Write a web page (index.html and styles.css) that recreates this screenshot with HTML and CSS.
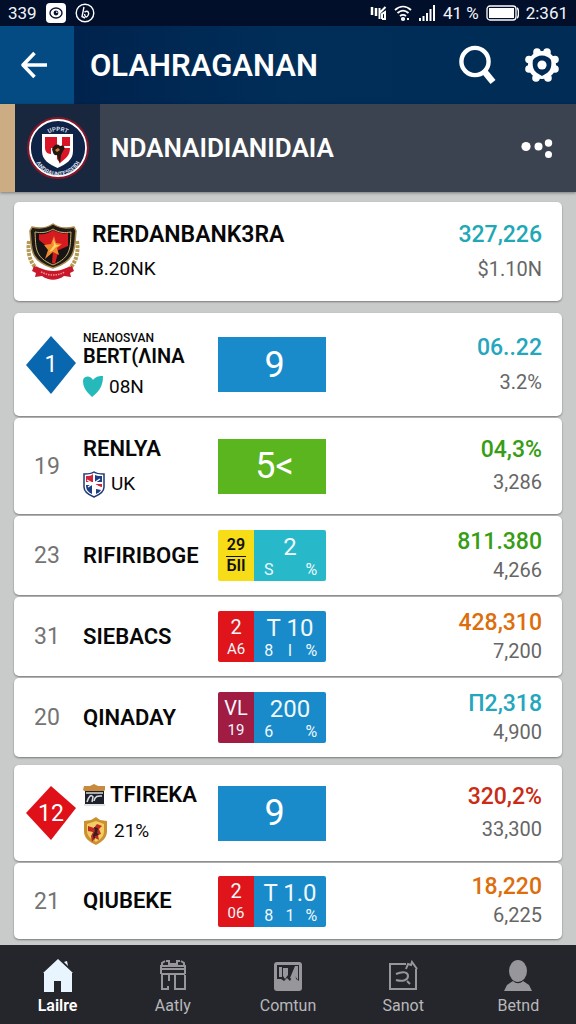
FILE: index.html
```html
<!DOCTYPE html>
<html lang="id">
<head>
  <meta charset="UTF-8" />
  <meta name="viewport" content="width=device-width, initial-scale=1.0" />
  <title>Olahraganan</title>
  <link rel="stylesheet" href="styles.css">
</head>
<body>
  <div class="status-bar">
    <div class="status-group">
      <span>339</span>
      <svg width="20" height="20" viewBox="0 0 20 20"><rect width="20" height="20" rx="4" fill="#fff"/><ellipse cx="10" cy="10" rx="6" ry="5" fill="none" stroke="#0a1530" stroke-width="1.4"/><circle cx="10" cy="10" r="2.4" fill="#0a1530"/><circle cx="10.8" cy="9.2" r=".8" fill="#fff"/></svg>
      <svg width="20" height="20" viewBox="0 0 20 20" fill="none" stroke="#fff" stroke-width="1.4"><circle cx="10" cy="10" r="8.8"/><path d="M9 4 7 13.500l3 1.500M9.500 9c4-2 5 1 3.500 3.500S10 14 9.500 11"/></svg>
    </div>
    <div class="status-group status-right">
      <svg width="17" height="16" viewBox="0 0 17 16" fill="none" stroke="#fff"><path stroke-width="2.5" d="M2 2v8M6 3v8"/><path stroke-width="2" d="M9.500 3v11M9.500 8l6-6M12 14h3V7l-3 2v5"/></svg>
      <svg width="18" height="17" viewBox="0 0 18 17" fill="none" stroke="#fff" stroke-width="1.8"><path d="M1 5c5-4.500 11-4.500 16 0M3.500 8c3.500-3 7.500-3 11 0M6 11c2-1.500 4-1.500 6 0"/><circle cx="9" cy="14" r="1.2"/><path d="M13 14h2"/></svg>
      <svg width="17" height="16" viewBox="0 0 17 16" fill="#fff"><path d="M0 13h2v3H0zM3.500 11h2v5h-2zM7 8h2v8H7zM10.500 4h2v12h-2zM14 0h2v16h-2z"/></svg>
      <span>41 %</span>
      <svg width="33" height="16" viewBox="0 0 33 16"><rect x="1" y="1" width="29" height="14" rx="3" fill="none" stroke="#fff" stroke-width="1.3"/><rect x="3" y="3" width="25" height="10" fill="#fff"/><path d="M31 3c2 1 2 9 0 10" fill="none" stroke="#fff" stroke-width="1.5"/></svg>
      <span>2:361</span>
    </div>
  </div>

  <header class="app-bar">
    <button class="back" aria-label="Kembali">
      <svg width="28" height="28" viewBox="0 0 28 28" fill="none" stroke="#fff" stroke-width="3.6" stroke-linejoin="round"><path d="M14.500 2 3 14l11.500 12M3 14h24"/></svg>
    </button>
    <h1>OLAHRAGANAN</h1>
    <button class="icon-button" aria-label="Cari">
      <svg width="38" height="40" viewBox="0 0 38 40" fill="none" stroke="#fff"><circle cx="17" cy="16.5" r="13.6" stroke-width="4.4"/><path stroke-width="6.5" d="m26 26 9 11"/></svg>
    </button>
    <button class="icon-button settings" aria-label="Pengaturan">
      <svg width="34" height="34" viewBox="-17 -17 34 34"><g fill="#fff"><circle r="14"/><circle cx="5" cy="-13" r="3.8"/><circle cx="-5" cy="-13" r="3.8"/><circle cx="13" cy="-5.5" r="3.8"/><circle cx="-13" cy="-5.5" r="3.8"/><circle cx="13" cy="4" r="3.8"/><circle cx="-13" cy="4" r="3.8"/><circle cx="6" cy="13" r="3.8"/><circle cx="-6" cy="13" r="3.8"/></g><path fill="#002b55" d="M-9-5C-5-11 5-11 9-5 10 0 9 5 5 8L0 11l-5-3C-9 5-10 0-9-5z"/><circle r="4.6" fill="#fff"/></svg>
    </button>
  </header>

  <section class="club-bar">
    <div class="club-logo">
      <svg width="64" height="66" viewBox="0 0 64 66">
        <defs><path id="ring-top" d="M15 28a18 18 0 0 1 34 0"/><path id="ring-bottom" d="M7 36a25 25 0 0 0 50 0"/></defs>
        <circle cx="32" cy="33" r="31" fill="#85172a"/><circle cx="32" cy="33" r="28" fill="#0e2346" stroke="#fff" stroke-width="1.8"/>
        <path d="M16 19h31v17c0 9-7 13-15.500 17C23 49 16 45 16 36z" fill="#fff"/>
        <path d="M19 22h12v11H19zM31 33h13c0 8-5 11-10 15l-3-4zM36 22h8v9h-8zM19 33h6v6c-4 0-6-3-6-6z" fill="#d91527"/>
        <path d="M26 34c2-4 5-6 8-3 4-2 6 2 3 5l-2 4-1 9-3-9c-3 1-4-2-5-6z" fill="#261511"/><path d="m29 35 3-2 2 2-3 2z" fill="#c58638"/>
        <text class="logo-text"><textPath href="#ring-top" startOffset="50%" text-anchor="middle">UPPRT</textPath></text>
        <text class="logo-text"><textPath href="#ring-bottom" startOffset="50%" text-anchor="middle">ANDRAUNTESSEIDI</textPath></text>
      </svg>
    </div>
    <h2>NDANAIDIANIDAIA</h2>
    <button class="icon-button more" aria-label="Lainnya">
      <svg width="32" height="22" viewBox="0 0 32 22" fill="#fff"><circle cx="5" cy="9.5" r="4.6"/><circle cx="17.5" cy="9.5" r="4"/><circle cx="27.5" cy="6" r="3.7"/><circle cx="27.5" cy="17.5" r="3.5"/></svg>
    </button>
  </section>

  <main>
    <article class="card summary">
      <svg width="54" height="58" viewBox="0 0 54 58">
        <path d="M3 18c-2 14 2 25 13 32M51 18c2 14-2 25-13 32" fill="none" stroke="#b49a54" stroke-width="4" stroke-dasharray="3 1"/>
        <path d="M27 1c6 4 13 5 21 3l2 4c-2 16 2 29-23 37C2 37 6 24 4 8l2-4c8 2 15 1 21-3z" fill="#211b17" stroke="#a58a4d" stroke-width="1.5"/>
        <path d="M27 6c6 4 12 4 18 3-1 15 1 25-18 33C8 34 10 24 9 9c6 1 12 1 18-3z" fill="#171415" stroke="#c7b06c"/>
        <path d="M13 11c5 1 10-1 14-4 5 3 10 4 15 3v13L28 29 13 17zM27 28l5 2-3 11-3-1z" fill="#d51a20"/>
        <path d="m28 13 2 7 6 1-5 4 2 7-6-3-8 7 3-9-4-5 7-1z" fill="#f08a2c"/><path d="m27 16 1 6-5 7 3-1 4-4 4-2h-4z" fill="#ffd567"/>
        <path d="m8 43 6 2c9 4 18 4 26 0l6-2 2 5-4 2 1 4-7-1c-7 5-15 5-22 0l-7 1 1-4-4-2z" fill="#c9182b"/><path d="M15 49c8 4 16 4 24 0" fill="none" stroke="#ee9b96" stroke-width="1.5" stroke-dasharray="1.5 1"/>
      </svg>
      <div class="info">
        <h3>RERDANBANK3RA</h3>
        <p class="volume">B.20NK</p>
      </div>
      <div class="values"><strong class="teal">327,226</strong><span>$1.10N</span></div>
    </article>

    <ul class="group">
      <li class="card row tall featured">
        <div class="rank diamond"><svg width="50" height="58" viewBox="0 0 50 58"><path d="m25 0 25 27-25 31L0 29z" fill="#0967b0"/></svg><span>1</span></div>
        <div class="info">
          <small>NEANOSVAN</small>
          <h3>BERT(ΛINA</h3>
          <p><svg width="20" height="21" viewBox="0 0 20 21"><path d="M10 4C13 0 17 0 20 0c0 8-2 14-11 21C2 14 0 11 0 4c2-5 8-4 10 0z" fill="#25bab9"/></svg>08N</p>
        </div>
        <div class="score blue">9</div>
        <div class="values"><strong class="cyan">06..22</strong><span>3.2%</span></div>
      </li>
      <li class="card row medium">
        <div class="rank">19</div>
        <div class="info">
          <h3>RENLYA</h3>
          <p><svg width="22" height="27" viewBox="0 0 22 27"><path d="M11 1c3 2 6 2 10 2v13c0 5-5 8-10 10C6 24 1 21 1 16V3c4 0 7 0 10-2z" fill="#fff" stroke="#1e3976" stroke-width="1.5"/><path d="M3 5c3 0 5 0 7-2v8H3z" fill="#cf243c"/><path d="M12 13h7v3c-2 0-5-1-7-3z" fill="#cf243c"/><path d="M12 4c2 1 4 1 7 1v6h-7zM3 14h6v9c-4-2-6-4-6-9zM13 18l5 1c-1 2-3 3-5 4z" fill="#1d3e80"/><path d="m4 9 14 8M17 8 5 16" stroke="#fff" stroke-width="1.4"/></svg>UK</p>
        </div>
        <div class="score green">5&lt;</div>
        <div class="values"><strong class="lime">04,3%</strong><span>3,286</span></div>
      </li>
      <li class="card row">
        <div class="rank">23</div>
        <div class="info"><h3>RIFIRIBOGE</h3></div>
        <div class="split">
          <div class="tag yellow"><b>29</b><b class="over">БII</b></div>
          <div class="stats turquoise"><b>2</b><span>S</span><span></span><span>%</span></div>
        </div>
        <div class="values"><strong class="lime">811.380</strong><span>4,266</span></div>
      </li>
      <li class="card row">
        <div class="rank">31</div>
        <div class="info"><h3>SIEBACS</h3></div>
        <div class="split">
          <div class="tag red"><b>2</b><span>A6</span></div>
          <div class="stats blue"><b>T 10</b><span>8</span><span>I</span><span>%</span></div>
        </div>
        <div class="values"><strong class="orange">428,310</strong><span>7,200</span></div>
      </li>
      <li class="card row">
        <div class="rank">20</div>
        <div class="info"><h3>QINADAY</h3></div>
        <div class="split">
          <div class="tag maroon"><b>VL</b><span>19</span></div>
          <div class="stats blue"><b>200</b><span>6</span><span></span><span>%</span></div>
        </div>
        <div class="values"><strong class="cyan">Π2,318</strong><span>4,900</span></div>
      </li>
    </ul>

    <ul class="group">
      <li class="card row medium featured">
        <div class="rank diamond"><svg width="50" height="54" viewBox="0 0 50 54"><path d="m25 0 25 22-25 32L0 27z" fill="#df1018"/></svg><span>12</span></div>
        <div class="info">
          <h3><svg width="23" height="22" viewBox="0 0 23 22"><path d="M1 2h6l4-2 4 2h7v4l-2 2H3L0 6z" fill="#c88a3c"/><path d="M2 7h19v13H2z" fill="#1d2029"/><path d="M3 9h17M4 18c2-6 4-8 6-5l-1 5M11 17c1-6 5-5 8-5M1 21h21" stroke="#d8dce0" stroke-width="1.5" fill="none"/></svg>TFIREKA</h3>
          <p><svg width="25" height="28" viewBox="0 0 25 28"><path d="m13 0 4 3 7 1v10c0 7-5 11-11 14C6 25 1 21 1 14V4l7-1z" fill="#c99130"/><path d="m13 4 8 3v7c0 5-3 8-8 11-5-3-9-6-9-11V7z" fill="#f4cc61"/><path d="m5 9 6 2 3-4 5 2-3 3 2 5-3 1 1 5-4-2-3 4-1-6 2-4-5-1z" fill="#bd2926"/><path d="m11 10 4 1-1 5 2 2-4 1-1 5-1-6 2-4z" fill="#35201e"/></svg>21%</p>
        </div>
        <div class="score blue">9</div>
        <div class="values"><strong class="crimson">320,2%</strong><span>33,300</span></div>
      </li>
      <li class="card row short">
        <div class="rank">21</div>
        <div class="info"><h3>QIUBEKE</h3></div>
        <div class="split">
          <div class="tag red"><b>2</b><span>06</span></div>
          <div class="stats blue"><b>T 1.0</b><span>8</span><span>1</span><span>%</span></div>
        </div>
        <div class="values"><strong class="orange">18,220</strong><span>6,225</span></div>
      </li>
    </ul>
  </main>

  <nav class="tab-bar">
    <a href="#" class="active">
      <svg width="32" height="34" viewBox="0 0 32 34" fill="#e8f5ff"><path d="M16 1 31 15h-1v19H19V23h-7v11H2V15H1zM22 4l3-1 1 5z"/></svg>
      Lailre
    </a>
    <a href="#">
      <svg width="28" height="32" viewBox="0 0 28 32" fill="none" stroke="#97979b" stroke-width="2"><path d="M2 14V6h24v8M2 9h24M2 14h24M3 6V3l3-2M25 6V3l-3-2M7 1h3v3h8V1h3M3 14v15h6v-3M16 15v14h10V15M10 14v7"/></svg>
      Aatly
    </a>
    <a href="#">
      <svg width="30" height="32" viewBox="0 0 30 32"><rect x="1" y="2" width="28" height="29" rx="3" fill="#97979b"/><path d="M4 5h22v16l-3-2-1-8-5 10-3-3-3 3-3-2H4z" fill="#25262b"/><path d="M6 7h3v10H6zM10 8h5v7l-3 4-2-3zM22 6h3v14l-3-4-3 3-2-1z" fill="#97979b"/></svg>
      Comtun
    </a>
    <a href="#">
      <svg width="30" height="32" viewBox="0 0 30 32" fill="none" stroke="#97979b" stroke-width="2"><path d="M18 4H2v25h26V9M18 9l2-5 3 1 1-3 5 7M8 14c7-3 12-2 12 2s-5 6-12 4M19 21l3 3"/></svg>
      Sanot
    </a>
    <a href="#">
      <svg width="28" height="32" viewBox="0 0 28 32" fill="#97979b"><ellipse cx="14" cy="11" rx="9" ry="11"/><path d="M9 21c3 3 7 3 10 0l6 4 3 6H0l3-6z"/></svg>
      Betnd
    </a>
  </nav>
</body>
</html>
```
FILE: styles.css
```css
* {
  box-sizing: border-box;
}
body {
  font-family: Roboto, "Noto Sans", sans-serif;
  margin: 0;
  min-height: 100vh;
  display: flex;
  flex-direction: column;
  background-color: #c9caca;
  color: #080808;
}
h1, h2, h3, p, ul {
  margin: 0;
  padding: 0;
}
button {
  border: none;
  background: none;
  padding: 0;
  cursor: pointer;
}
svg {
  display: block;
  flex-shrink: 0;
}

/* status bar */
.status-bar {
  display: flex;
  justify-content: space-between;
  align-items: center;
  height: 26px;
  padding: 0 8px;
  background-color: #010f2b;
  color: #f2f5fa;
  font-size: 17px;
  line-height: 20px;
}
.status-group {
  display: flex;
  align-items: center;
  gap: 9px;
}
.status-right {
  gap: 7px;
}

/* header */
.app-bar {
  display: flex;
  align-items: center;
  height: 78px;
  padding-right: 17px;
  background: linear-gradient(90deg, #001f49, #002e59 50%, #002c55);
}
.back {
  display: flex;
  align-items: center;
  justify-content: center;
  align-self: stretch;
  width: 74px;
  padding-right: 6px;
  background-color: #034b82;
}
.app-bar h1 {
  flex: 1;
  padding-left: 16px;
  color: white;
  font-size: 31px;
  font-weight: 600;
}
.settings {
  margin-left: 29px;
}
.club-bar {
  display: flex;
  align-items: center;
  height: 88px;
  padding-right: 23px;
  border-left: 15px solid #ccad83;
  background-color: #3c4350;
  box-shadow: 0 1px 3px rgba(0, 0, 0, 0.4);
}
.club-logo {
  display: flex;
  align-items: center;
  justify-content: center;
  align-self: stretch;
  width: 85px;
  background-color: #18273e;
}
.logo-text {
  fill: #d9dfeb;
  font-size: 6px;
  font-weight: 700;
}
.club-bar h2 {
  flex: 1;
  padding-left: 11px;
  color: white;
  font-size: 26px;
  font-weight: 600;
}

/* cards */
main {
  flex: 1;
  display: flex;
  flex-direction: column;
  gap: 8px;
  padding: 10px 14px 6px;
}
.card {
  background-color: white;
  border-radius: 5px;
  box-shadow: 0 1px 2px rgba(0, 0, 0, 0.4);
}
.summary {
  display: flex;
  align-items: center;
  gap: 12px;
  min-height: 99px;
  margin-bottom: 4px;
  padding: 0 20px 0 12px;
}
.summary .info {
  flex: 1;
}
.summary h3 {
  font-size: 23px;
  line-height: 32px;
}
.info .volume {
  font-size: 19px;
  line-height: 32px;
  margin-top: 2px;
}
.group {
  display: flex;
  flex-direction: column;
  gap: 2px;
  list-style: none;
}
.row {
  display: grid;
  grid-template-columns: 69px 135px 108px 1fr;
  align-items: center;
  min-height: 79px;
  padding-right: 20px;
}
.tall {
  min-height: 103px;
}
.medium {
  min-height: 96px;
}
.short {
  min-height: 76px;
}
.rank {
  padding-left: 20px;
  color: #747474;
  font-size: 23px;
}
.diamond {
  display: grid;
  place-items: center;
  justify-content: start;
  padding-left: 12px;
  color: white;
}
.diamond svg, .diamond span {
  grid-area: 1 / 1;
}
.info h3 {
  display: flex;
  align-items: center;
  gap: 4px;
  font-weight: 600;
  white-space: nowrap;
}
.row h3 {
  font-size: 22px;
  line-height: 28px;
}
.info small {
  display: block;
  font-size: 12px;
  font-weight: 500;
  line-height: 14px;
}
.tall h3 {
  font-size: 20px;
  line-height: 22px;
}
.info p {
  display: flex;
  align-items: center;
  gap: 6px;
  font-size: 19px;
  line-height: 24px;
  margin-top: 8px;
}
.score {
  display: flex;
  align-items: center;
  justify-content: center;
  height: 55px;
  padding-left: 5px;
  color: white;
  font-size: 36px;
}
.split {
  display: flex;
  height: 51px;
  border-radius: 2px;
  overflow: hidden;
  color: #f0f8fc;
}
.tag {
  display: flex;
  flex-direction: column;
  align-items: center;
  justify-content: center;
  gap: 2px;
  width: 36px;
  font-size: 15px;
  line-height: 18px;
}
.tag b {
  font-size: 20px;
  font-weight: 400;
  line-height: 22px;
}
.tag.yellow b {
  font-size: 16px;
  line-height: 18px;
  font-weight: 600;
}
.tag .over {
  border-top: 1px solid #111;
}
.stats {
  flex: 1;
  display: grid;
  grid-template-columns: repeat(3, 1fr);
  align-content: center;
  justify-items: center;
  padding: 2px 4px 0;
  font-size: 16px;
  line-height: 18px;
}
.stats b {
  grid-column: 1 / -1;
  font-size: 24px;
  font-weight: 400;
  line-height: 27px;
}
.values {
  display: flex;
  flex-direction: column;
  align-items: flex-end;
  gap: 2px;
  color: #666;
  font-size: 20px;
  line-height: 26px;
}
.values strong {
  font-size: 23px;
  font-weight: 500;
  line-height: 26px;
}
.summary .values, .featured .values {
  gap: 8px;
}
.medium .values {
  gap: 6px;
}

/* colours */
.blue {
  background-color: #198bca;
}
.green {
  background-color: #5bb51f;
}
.yellow {
  background-color: #f7dc18;
  color: #111;
}
.turquoise {
  background-color: #27b9c9;
}
.red {
  background-color: #df151b;
}
.maroon {
  background-color: #a01c43;
}
.teal {
  color: #20a8b4;
}
.cyan {
  color: #24a6bd;
}
.lime {
  color: #369d14;
}
.orange {
  color: #dc6e0c;
}
.crimson {
  color: #ca2b14;
}

/* bottom navigation */
.tab-bar {
  display: grid;
  grid-template-columns: repeat(5, 1fr);
  min-height: 79px;
  background-color: #25262b;
}
.tab-bar a {
  display: flex;
  flex-direction: column;
  align-items: center;
  justify-content: flex-end;
  gap: 4px;
  padding-bottom: 8px;
  color: #b8b8bb;
  font-size: 16px;
  line-height: 20px;
  text-decoration: none;
}
.tab-bar .active {
  color: white;
  font-weight: 600;
}
```
